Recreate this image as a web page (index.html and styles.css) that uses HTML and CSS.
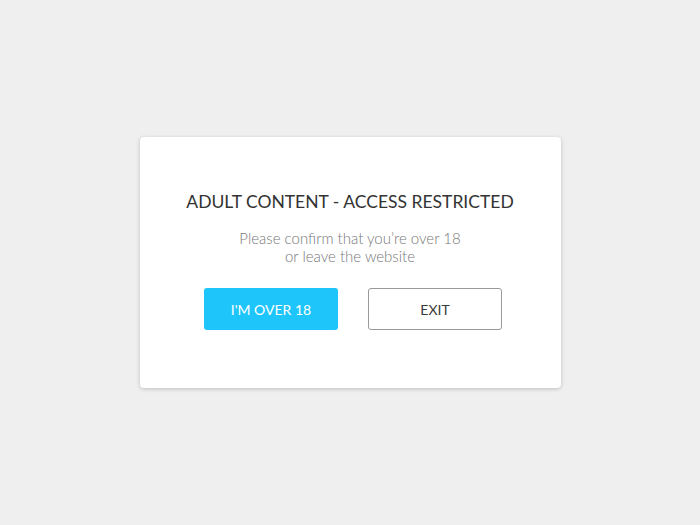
FILE: index.html
```html
<!DOCTYPE html>
<html lang="en">
<head>
  <meta charset="UTF-8" />
  <meta name="viewport" content="width=device-width, initial-scale=1" />
  <title>Age verification</title>
  <link rel="stylesheet" href="styles.css">
</head>
<body>
  <!-- age gate modal -->
  <div class="age-gate">
    <h1>ADULT CONTENT - ACCESS RESTRICTED</h1>
    <p class="age-text">Please confirm that you’re over 18<br>or leave the website</p>
    <div class="age-actions">
      <button class="btn btn-primary">I'M OVER 18</button>
      <button class="btn btn-outline">EXIT</button>
    </div>
  </div>
</body>
</html>
```

FILE: styles.css
```css
html, body {
  height: 100%;
}

body {
  margin: 0;
  font-family: Lato, 'Open Sans', sans-serif;
  background: #efefef;
  color: #222;
  display: flex;
  align-items: center;
  justify-content: center;
}

.age-gate {
  width: 421px;
  height: 251px;
  box-sizing: border-box;
  padding: 53px 20px 0;
  background: #fff;
  border-radius: 4px;
  box-shadow: 0 1px 4px rgba(0,0,0,0.2);
  text-align: center;
}

.age-gate h1 {
  margin: 0;
  font-size: 17.5px;
  font-weight: 400;
  line-height: 24px;
  color: #333;
}

.age-text {
  margin: 15px 0 0;
  font-size: 15px;
  font-weight: 300;
  line-height: 18px;
  color: #777;
}

.age-actions {
  margin-top: 23px;
  padding-left: 6px;
  display: flex;
  justify-content: center;
  gap: 30px;
}

.btn {
  width: 134px;
  height: 42px;
  font-family: inherit;
  font-size: 14px;
  border-radius: 3px;
  cursor: pointer;
}

.btn-primary {
  background: #1ec5fa;
  border: none;
  color: #fff;
}

.btn-outline {
  background: #fff;
  border: 1px solid #999;
  color: #3a3a3a;
}
```
